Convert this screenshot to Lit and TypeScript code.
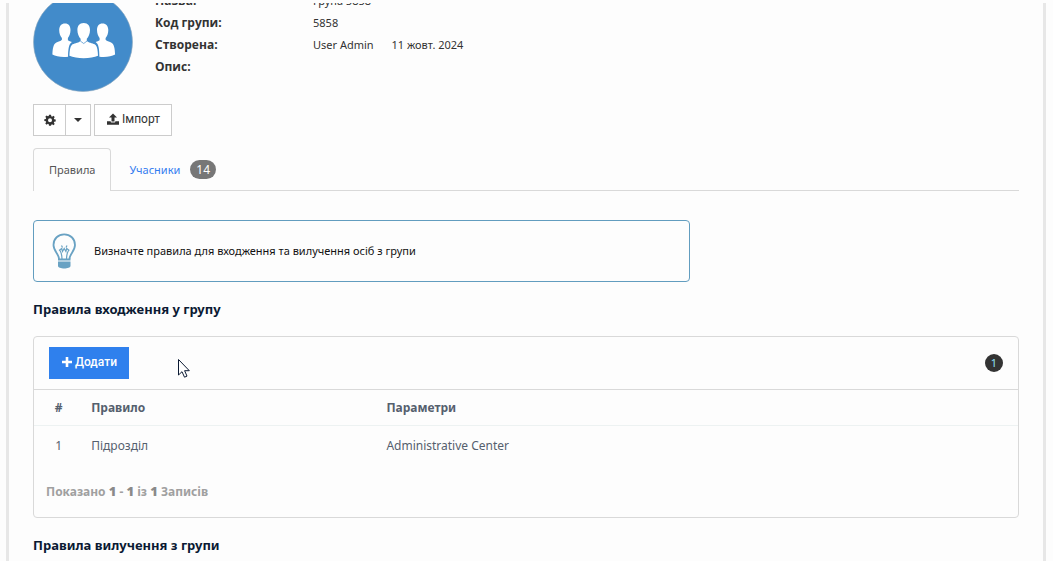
import { LitElement, html, css } from "lit";
import { customElement, state } from "lit/decorators.js";

interface Rule {
  name: string;
  params: string;
}

@customElement("app-root")
export class AppRoot extends LitElement {
  static styles = css`
    :host {
      display: block;
      box-sizing: border-box;
      height: 100vh;
      padding: 3px 7px 0 6px;
      overflow: hidden;
      position: relative;
      background: #fdfdfd;
      color: #333;
      font: 11px/22px "Noto Sans", "Open Sans", sans-serif;
    }
    *, *::before, *::after { box-sizing: border-box; }
    .page {
      height: 100%;
      overflow: hidden;
      border: solid #e7e7e7;
      border-width: 0 3px;
      padding: 0 24px;
    }
    .profile {
      display: flex;
      gap: 22px;
      align-items: flex-end;
      margin-top: -13px;
      height: 102px;
    }
    .avatar { width: 100px; height: 100px; display: block; flex: none; }
    .details {
      margin: 0;
      align-self: flex-start;
      display: grid;
      grid-template-columns: 158px auto;
      grid-auto-rows: 22px;
    }
    .details dt { font-family: "Open Sans", sans-serif; font-size: 12px; font-weight: 700; }
    .details dd { margin: 0; }
    .details .date { margin-left: 15px; }
    .actions { display: flex; gap: 3px; margin-top: 12px; }
    .split { display: flex; }
    .btn {
      height: 32px;
      border: 1px solid #ccc;
      background: #fff;
      color: #333;
      font: 12px/18px Roboto, sans-serif;
      padding: 0 11px 2px 12px;
      margin: 0;
      display: inline-flex;
      align-items: center;
      gap: 3px;
    }
    .btn svg { display: block; flex: none; }
    .gear { padding: 0 9px 0 10px; }
    .caret { padding: 0 8px; margin-left: -1px; }
    .tabs {
      display: flex;
      margin-top: 12px;
      border-bottom: 1px solid #d9d9d9;
    }
    .tab {
      height: 42px;
      padding: 0 15px;
      border: 1px solid transparent;
      border-bottom: 0;
      border-radius: 4px 4px 0 0;
      display: flex;
      align-items: center;
      gap: 10px;
      margin-right: 2px;
      color: #337cf0;
      text-decoration: none;
    }
    .tab.active {
      color: #555;
      background: #fdfdfd;
      border-color: #d9d9d9;
      height: 43px;
      margin-bottom: -1px;
    }
    .badge {
      background: #777;
      color: #fff;
      border-radius: 10px;
      height: 19px;
      font-size: 12px;
      line-height: 19px;
      padding: 0 6px;
    }
    .hint {
      margin-top: 29px;
      width: 66.67%;
      height: 62px;
      border: 1px solid #629dbf;
      border-radius: 4px;
      display: flex;
      align-items: center;
      gap: 17px;
      padding: 0 18px;
      color: #111;
    }
    h2 {
      margin: 16px 0 15px;
      font-size: 13px;
      line-height: 23px;
      font-weight: 700;
      color: #0b1a33;
    }
    .card {
      border: 1px solid #d9d9d9;
      border-radius: 4px;
      color: #55606e;
    }
    .bar {
      height: 53px;
      padding: 0 15px;
      display: flex;
      align-items: center;
      justify-content: space-between;
      border-bottom: 1px solid #d9d9d9;
    }
    .primary {
      background: #2f80ed;
      border-color: #2f80ed;
      color: #fff;
      font-weight: 500;
    }
    .count {
      width: 18px;
      height: 18px;
      border-radius: 50%;
      background: #333;
      color: #8fe0f5;
      text-align: center;
      line-height: 18px;
    }
    table {
      width: 100%;
      border-collapse: separate;
      border-spacing: 0;
      table-layout: fixed;
      font-size: 12px;
      line-height: 20px;
    }
    th, td { text-align: left; padding: 0 8px; }
    th { height: 36px; border-bottom: 1px solid #edf2f2; font-weight: 700; }
    td { height: 40px; }
    .num { width: 5%; text-align: center; }
    .rule { width: 30%; }
    .summary {
      margin: 0;
      padding: 14px 12px;
      font-size: 12px;
      line-height: 23px;
      font-weight: 700;
      color: #a0a0a0;
    }
    .summary b { font-size: 13px; color: #8a8a8a; }
    .pointer { position: absolute; left: 177px; top: 358px; }
  `;

  @state() private rules: Rule[] = [
    { name: "Підрозділ", params: "Administrative Center" },
  ];

  render() {
    const total = this.rules.length;
    return html`
      <main class="page">
        <section class="profile">
          <svg class="avatar" viewBox="0 0 100 100" aria-hidden="true">
            <circle cx="50" cy="50" r="49.5" fill="#428bca" stroke="#8fa9bd" stroke-width=".6" />
            <g fill="#fff">
              <path d="M32 31.500c3.700 0 5.500 2.700 5.500 6.500 0 3.300-1.300 6.500-2.600 8v2.200c2 1.200 3.200 1.400 4 1.700-3.200 2-3.700 7-3.800 14.800-7 .6-12.200-.3-15.700-2.200.3-6.500 1-10.500 4-12 2.500-1.200 4-1.200 5.500-2.700v-1.800c-1.500-1.500-2.700-4.700-2.700-8 0-3.800 2.100-6.500 5.800-6.500z" />
              <path d="M69.500 31.500c-3.700 0-5.500 2.700-5.500 6.500 0 3.300 1.300 6.500 2.600 8v2.200c-2 1.200-3.200 1.400-4 1.700 3.200 2 3.700 7 3.800 14.800 7 .6 12.200-.3 15.700-2.200-.3-6.500-1-10.500-4-12-2.500-1.200-4-1.200-5.500-2.700v-1.800c1.500-1.500 2.700-4.700 2.700-8 0-3.800-2.100-6.500-5.800-6.500z" />
              <path stroke="#428bca" stroke-width="1.600" paint-order="stroke" d="M50.700 31c4.400 0 6.300 3 6.300 7 0 3.700-1.500 7-3.200 8.800v2.300c3 2.500 6.800 2 8.800 4 1.800 2 2.200 6 2.400 10.700-7 3.100-21.600 3.100-28.600 0 .2-4.700.6-8.700 2.400-10.700 2-2 5.800-1.500 8.800-4v-2.300c-1.700-1.800-3.200-5.100-3.200-8.800 0-4 1.900-7 6.300-7z" />
            </g>
            <path d="M47.300 49l3.400 2.500 3.400-2.500" fill="none" stroke="#428bca" stroke-width=".7" />
          </svg>
          <dl class="details">
            <dt>Назва:</dt><dd>Група 5858</dd>
            <dt>Код групи:</dt><dd>5858</dd>
            <dt>Створена:</dt><dd>User Admin <span class="date">11 жовт. 2024</span></dd>
            <dt>Опис:</dt><dd></dd>
          </dl>
        </section>

        <div class="actions">
          <div class="split">
            <button class="btn gear" type="button" aria-label="Налаштування">
              <svg width="12" height="12" viewBox="0 0 12 12">
                <path fill="#333" fill-rule="evenodd" d="M5 .8h2l.3 1.500.8.35 1.300-.85 1.300 1.300-.85 1.300.35.8 1.500.3v2l-1.500.3-.35.8.85 1.300-1.300 1.300-1.300-.85-.8.35L7 11.700H5l-.3-1.500-.8-.35-1.300.85-1.300-1.300.85-1.300-.35-.8L.3 7V5.200l1.500-.3.350-.8L1.300 2.800l1.300-1.300 1.300.85.8-.35zM6 4.300a2 2 0 1 0 0 4 2 2 0 0 0 0-4z" />
              </svg>
            </button>
            <button class="btn caret" type="button" aria-label="Більше">
              <svg width="8" height="4" viewBox="0 0 8 4"><path fill="#333" d="M0 0h8L4 4z" /></svg>
            </button>
          </div>
          <button class="btn" type="button">
            <svg width="12" height="12" viewBox="0 0 12 12">
              <path fill="#333" d="M6 .5l4 4H7.500v4h-3v-4H2zM0 8.300h3.700v.5c0 .400.300.700.700.700h3.200c.4 0 .7-.3.7-.7v-.5H12v3.400H0z" />
            </svg>
            Імпорт
          </button>
        </div>

        <nav class="tabs">
          <a class="tab active" href="#rules">Правила</a>
          <a class="tab" href="#members">Учасники <span class="badge">14</span></a>
        </nav>

        <div class="hint">
          <svg width="25" height="36" viewBox="0 0 25 36" aria-hidden="true">
            <g fill="none" stroke="#69a2c3" stroke-width="1.800">
              <path d="M7 26c0-5-5.500-8-5.500-14C1.500 5.500 6.300 1.400 12.200 1.400S23 5.500 23 12c0 6-5.500 9-5.500 14" />
              <path stroke-width="1.200" d="M10 26c0-4-1-7-2.500-9.500M14.500 26c0-4 1-7 2.500-9.500M7 17.500l2.700-2 .8 3 1.700-3 1.700 3 .8-3 2.700 2M9.500 12.500l1 2M15 12.500l-1 2" />
            </g>
            <path fill="#69a2c3" d="M6 25.500h12.500v2H6zM6 28.500h12.500v4.500c0 1.500-3 2.500-6.250 2.500S6 34.500 6 33z" />
          </svg>
          <span>Визначте правила для входження та вилучення осіб з групи</span>
        </div>

        <h2>Правила входження у групу</h2>
        <section class="card">
          <div class="bar">
            <button class="btn primary" type="button">
              <svg width="10" height="10" viewBox="0 0 10 10"><path fill="#fff" d="M3.700 0h2.600v3.700H10v2.600H6.300V10H3.700V6.300H0V3.700h3.700z" /></svg>
              Додати
            </button>
            <span class="count">${total}</span>
          </div>
          <table>
            <thead>
              <tr>
                <th class="num" scope="col">#</th>
                <th class="rule" scope="col">Правило</th>
                <th scope="col">Параметри</th>
              </tr>
            </thead>
            <tbody>
              ${this.rules.map(
                (rule, i) => html`
                  <tr><td class="num">${i + 1}</td><td>${rule.name}</td><td>${rule.params}</td></tr>
                `
              )}
            </tbody>
          </table>
          <p class="summary">Показано <b>1</b> - <b>${total}</b> із <b>${total}</b> Записів</p>
        </section>

        <h2>Правила вилучення з групи</h2>
      </main>
      <svg class="pointer" width="14" height="21" viewBox="0 0 14 21" aria-hidden="true">
        <path fill="#fff" stroke="#0b1a33" stroke-width="1" d="M1.500 1.500v15.500l3.500-3.300 2.500 5.500 2.500-1.100-2.400-5.400h4.700z" />
      </svg>
    `;
  }
}
